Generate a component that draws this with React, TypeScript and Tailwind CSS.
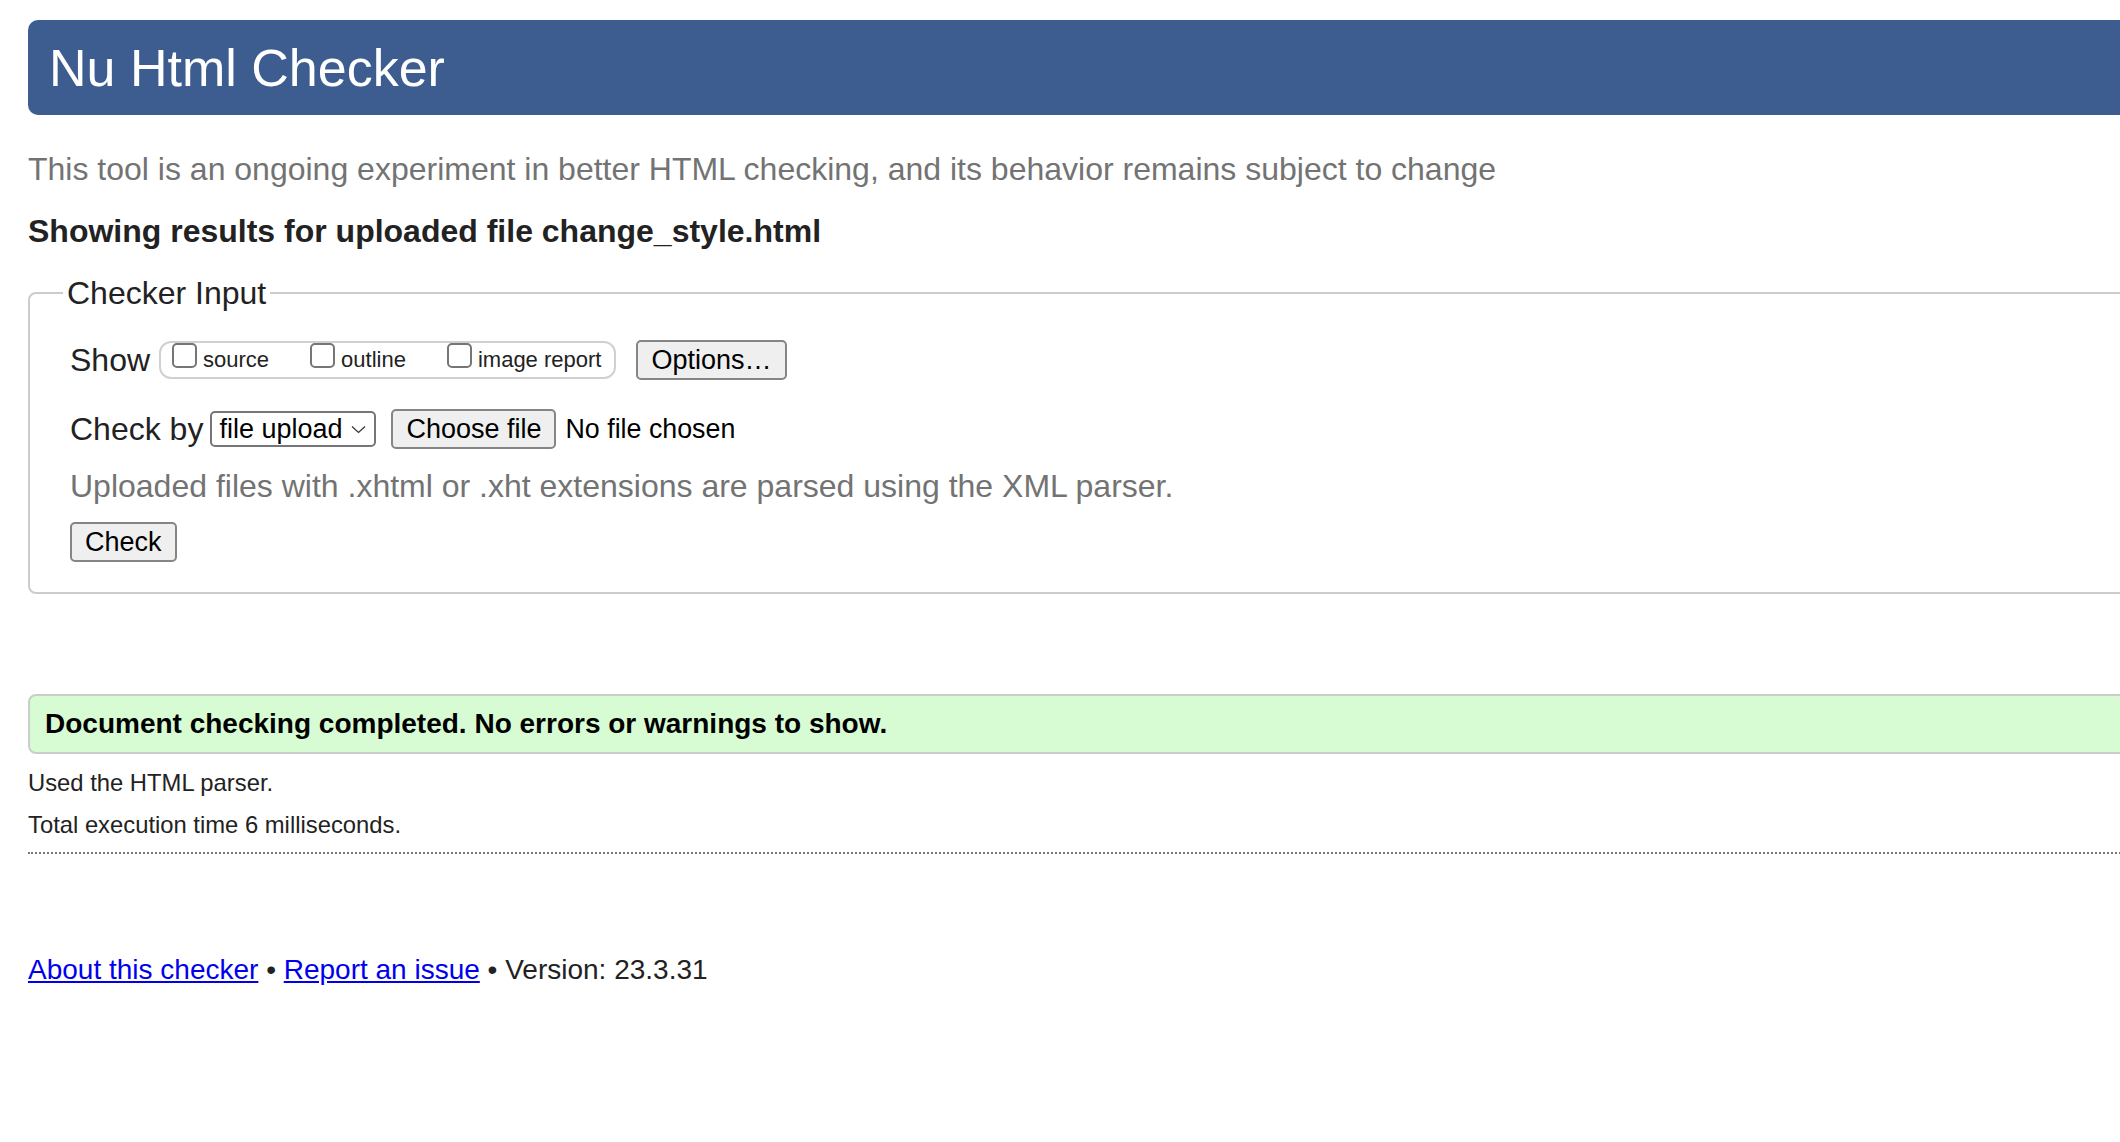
import React from "react";

const Checkbox = ({ label }: { label: string }) => (
    <label className="flex items-center">
        <span className="mb-[10px] mr-[6px] h-[25px] w-[25px] rounded-[5px] border-2 border-[#767676] bg-white" />
        <span className="text-[22px] leading-[24px] text-[#222]">{label}</span>
    </label>
);

const Button = ({ children }: { children: React.ReactNode }) => (
    <button className="h-[40px] rounded-[5px] border-2 border-[#858585] bg-[#efefef] px-[13px] text-[27px] leading-[30px] text-black">
        {children}
    </button>
);

const App = () => {
    return (
        <div className="min-h-screen w-full overflow-hidden bg-white font-['Liberation_Sans',Arial,sans-serif] text-[#222]">
            <div className="w-[2200px] pl-[28px]">
                {/* Title bar */}
                <h1 className="mt-[20px] flex h-[95px] items-center rounded-l-[10px] bg-[#3d5c90] pl-[21px] text-[52px] font-normal text-white">
                    Nu Html Checker
                </h1>

                <p className="mt-[36px] text-[32px] leading-[36px] text-[#737373]">
                    This tool is an ongoing experiment in better HTML checking, and its behavior remains subject to change
                </p>

                <p className="mt-[26px] text-[32px] font-bold leading-[36px] text-[#222]">
                    Showing results for uploaded file change_style.html
                </p>

                {/* Checker input */}
                <fieldset className="mt-[26px] rounded-[8px] border-2 border-[#cccccc] pb-[30px] pl-[40px] pt-[29px]">
                    <legend className="ml-[-7px] px-[4px] text-[32px] leading-[36px] text-[#222]">Checker Input</legend>

                    <div className="flex items-center">
                        <span className="text-[32px] leading-[36px]">Show</span>
                        <div className="ml-[9px] flex h-[38px] items-center gap-[41px] rounded-[12px] border-2 border-[#d0d0d0] pl-[11px] pr-[13px]">
                            <Checkbox label="source" />
                            <Checkbox label="outline" />
                            <Checkbox label="image report" />
                        </div>
                        <div className="ml-[20px]">
                            <Button>Options…</Button>
                        </div>
                    </div>

                    <div className="mt-[29px] flex items-center">
                        <span className="text-[32px] leading-[36px]">Check by</span>
                        <div className="ml-[7px] flex h-[36px] w-[166px] items-center justify-between rounded-[5px] border-2 border-[#767676] bg-white pl-[7px] pr-[8px] text-[27px] leading-[30px] text-black">
                            <span>file upload</span>
                            <svg width="15" height="9" viewBox="0 0 15 9" fill="none">
                                <polyline points="1,1.5 7.5,7.5 14,1.5" stroke="#333" strokeWidth="1.2" />
                            </svg>
                        </div>
                        <div className="ml-[15px]">
                            <Button>Choose file</Button>
                        </div>
                        <span className="ml-[9px] text-[26.8px] leading-[30px] text-black">No file chosen</span>
                    </div>

                    <p className="mt-[19px] text-[32px] leading-[36px] text-[#737373]">
                        Uploaded files with .xhtml or .xht extensions are parsed using the XML parser.
                    </p>

                    <div className="mt-[18px]">
                        <Button>Check</Button>
                    </div>
                </fieldset>

                {/* Result */}
                <div className="mt-[100px] rounded-[8px] border-2 border-[#cccccc] bg-[#d7fcd3] py-[11px] pl-[15px]">
                    <p className="text-[28px] font-bold leading-[34px] text-black">
                        Document checking completed. No errors or warnings to show.
                    </p>
                </div>

                <p className="mt-[14px] text-[23.8px] leading-[30px] text-[#222]">Used the HTML parser.</p>
                <p className="mt-[12px] text-[23.8px] leading-[30px] text-[#222]">Total execution time 6 milliseconds.</p>

                <div className="mt-[12px] border-b-2 border-dotted border-[#777]" />

                {/* Footer */}
                <p className="mt-[99px] text-[28px] leading-[34px] text-[#222]">
                    <a href="#" className="text-[#0000ee] underline">
                        About this checker
                    </a>{" "}
                    •{" "}
                    <a href="#" className="text-[#0000ee] underline">
                        Report an issue
                    </a>{" "}
                    • Version: 23.3.31
                </p>
            </div>
        </div>
    );
};

export default App;
